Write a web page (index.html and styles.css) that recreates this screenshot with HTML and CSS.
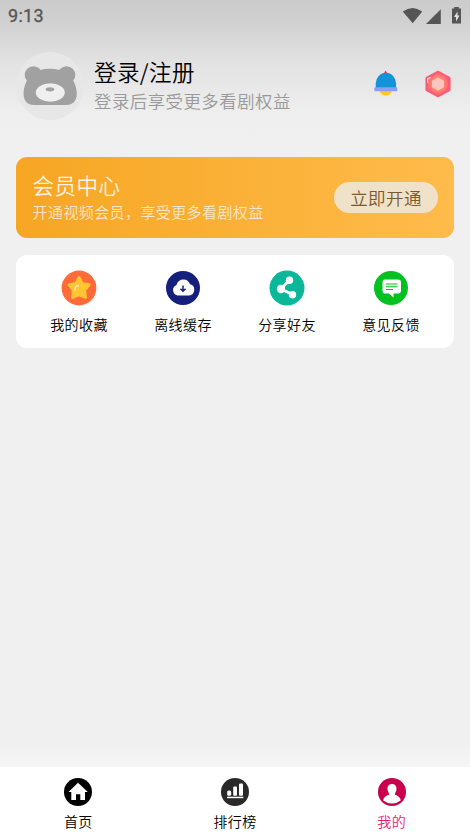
FILE: index.html
```html
<!DOCTYPE html>
<html lang="zh-CN">
<head>
<meta charset="utf-8">
<title>我的</title>
<link rel="stylesheet" href="styles.css">
</head>
<body>
<div class="screen">
  <header class="status">
    <span class="clock">9:13</span>
    <svg class="status-icons" width="62" height="20" viewBox="0 0 62 20" fill="#555">
      <path d="M.8 4.500Q10.500-2.500 20.200 4.500L10.700 16.300Z"/>
      <path d="M38.800 2.200V17H24Z"/>
      <path d="M50 1.500H52.200V0H56.800V1.500H59V16.500H50V1.500Z"/>
      <path d="M55.500 4.500L52 10H54V14.500L57.500 8.500H55.500Z" fill="#e0e0e0"/>
    </svg>
  </header>

  <section class="profile">
    <svg class="avatar" width="68" height="68" viewBox="0 0 68 68">
      <circle cx="34" cy="34" r="34" fill="#e7e7e7"/>
      <g fill="#a1a1a1">
        <circle cx="17.500" cy="23" r="8.800"/>
        <circle cx="50.500" cy="23" r="8.800"/>
        <path d="M34 16.800C48 16.800 58 24 60.500 38C62 47 58 53 50 53H18C10 53 6.500 47 7.800 38C10 24 20 16.800 34 16.800Z"/>
      </g>
      <ellipse cx="34.300" cy="40.500" rx="14.500" ry="9.200" fill="#efefef"/>
      <ellipse cx="34" cy="37.300" rx="4.300" ry="2.100" fill="#a1a1a1"/>
    </svg>
    <div class="account">
      <h1>登录/注册</h1>
      <p>登录后享受更多看剧权益</p>
    </div>
    <div class="shortcuts">
      <svg width="24" height="27" viewBox="0 0 24 27">
        <path d="M9.500 4L11.500 .5L14 4Z" fill="#f03b50"/>
        <path d="M5 19.500H18.500Q17 25.500 11.800 25.500T5 19.500Z" fill="#ffc81e"/>
        <path d="M1.700 18V13.500A10.200 10.700 0 0 1 22.100 13.500V18Z" fill="#1494d8"/>
        <rect x=".3" y="17.300" width="23" height="3.900" rx="1" fill="#8c9df5"/>
      </svg>
      <svg width="26" height="28" viewBox="0 0 26 28">
        <defs><radialGradient id="gem"><stop offset=".4" stop-color="#ff946e"/><stop offset="1" stop-color="#fc5c73"/></radialGradient></defs>
        <path d="M13 1.800L24.500 8V20L13 26.200L1.500 20V8Z" fill="url(#gem)" stroke="#fb5c78" stroke-width="2.200" stroke-linejoin="round"/>
        <path d="M13 7.500L19 10.800V17.200L13 20.500L7 17.200V10.800Z" fill="#ffc4be"/>
        <path d="M2.700 13V9L5.500 7.200" fill="none" stroke="#ffe5e4" stroke-width="1.200"/>
      </svg>
    </div>
  </section>

  <section class="member">
    <div class="member-text">
      <h2>会员中心</h2>
      <p>开通视频会员，享受更多看剧权益</p>
    </div>
    <a class="open-btn">立即开通</a>
  </section>

  <section class="actions">
    <a class="action">
      <svg width="36" height="36" viewBox="0 0 36 36">
        <circle cx="18" cy="18" r="17.400" fill="#ff6b38"/>
        <path d="M18 7.500L21.200 13.700L28 14.800L23.500 20.200L24.500 27.300L18 24.500L11.500 27.300L12.500 20.200L8 14.800L14.800 13.700Z" fill="#ffc632" stroke="#ffc632" stroke-width="3" stroke-linejoin="round"/>
        <path d="M14 20Q13.800 16.300 17.300 15.700" fill="none" stroke="#fff3c9" stroke-width="1.300" stroke-linecap="round"/>
      </svg>
      <span>我的收藏</span>
    </a>
    <a class="action">
      <svg width="36" height="36" viewBox="0 0 36 36">
        <circle cx="18" cy="18" r="17" fill="#14207c"/>
        <path d="M12.500 25.500A5.500 5.500 0 0 1 11.500 15Q13 9.500 18.500 9.500Q23.500 9.500 25 14.300A5.700 5.700 0 0 1 24 25.500Z" fill="#fff"/>
        <path d="M18 15.500V20.500M15.500 18.700L18 21.200L20.500 18.700" fill="none" stroke="#14207c" stroke-width="1.500"/>
      </svg>
      <span>离线缓存</span>
    </a>
    <a class="action">
      <svg width="36" height="36" viewBox="0 0 36 36">
        <circle cx="18" cy="18" r="17.500" fill="#0ab798"/>
        <path d="M20.500 10L12 19L23.500 24.500" fill="none" stroke="#fff" stroke-width="2.800"/>
        <g fill="#fff"><circle cx="20.500" cy="10.300" r="3.700"/><circle cx="12" cy="19" r="4.200"/><circle cx="23.500" cy="24.700" r="3.700"/></g>
      </svg>
      <span>分享好友</span>
    </a>
    <a class="action">
      <svg width="36" height="36" viewBox="0 0 36 36">
        <circle cx="18" cy="18" r="17" fill="#04c122"/>
        <path d="M12 9.500H25Q28 9.500 28 12.500V20.500Q28 23.500 25 23.500H20.500V27.500L16 23.500H12Q9.500 23.500 9.500 20.500V12.500Q9.500 9.500 12 9.500Z" fill="#fff"/>
        <path d="M13 14H24.500M13 16.700H24.500M13 19.500H20" stroke="#04c122" stroke-width="1.100"/>
      </svg>
      <span>意见反馈</span>
    </a>
  </section>

  <nav class="tabs">
    <a class="tab">
      <svg width="28" height="28" viewBox="0 0 28 28">
        <circle cx="14" cy="14" r="14" fill="#000"/>
        <path d="M14 4.800L23.800 14H21V22H16.300V16.200H12V22H7.300V14H4.500Z" fill="#fff"/>
      </svg>
      <span>首页</span>
    </a>
    <a class="tab">
      <svg width="28" height="28" viewBox="0 0 28 28">
        <circle cx="14" cy="14" r="14" fill="#292929"/>
        <g fill="#fff"><rect x="6.200" y="12.500" width="4" height="5.300" rx="1.500"/><rect x="12.200" y="8.500" width="3.800" height="9.300" rx="1"/><rect x="18" y="5.500" width="4" height="12.300" rx="1"/><rect x="6" y="18.700" width="16.300" height="1.500"/></g>
      </svg>
      <span>排行榜</span>
    </a>
    <a class="tab active">
      <svg width="28" height="28" viewBox="0 0 28 28">
        <circle cx="14" cy="14" r="14" fill="#c9004c"/>
        <path d="M14 6C17 6 18.700 8.200 18.500 11.500C18.400 13.500 17 14.700 16.800 16.500C19.500 17.500 22.500 19.200 22.700 22.500Q19 25.500 14 25.500T5.300 22.500C5.500 19.200 8.500 17.500 11.200 16.500C11 14.700 9.600 13.500 9.500 11.500C9.300 8.200 11 6 14 6Z" fill="#fff"/>
      </svg>
      <span>我的</span>
    </a>
  </nav>
</div>
</body>
</html>
```
FILE: styles.css
```css
* { box-sizing: border-box; }
body, h1, h2, p { margin: 0; font-weight: 350; }
body { font-family: "Noto Sans CJK SC", sans-serif; color: #000; }
svg { display: block; flex: none; }
.screen {
  height: 837px;
  display: flex;
  flex-direction: column;
  background: linear-gradient(#cbcbcb 0, #cfcfcf 18px, #e2e2e2 62px, #efefef 115px, #f0f0f0 145px, #f0f0f0 745px, #f6f6f6 767px);
}
.status {
  height: 32px;
  padding: 0 6px 0 8px;
  display: flex;
  justify-content: space-between;
  align-items: center;
}
.clock { font: 400 18px/20px Roboto, sans-serif; color: #555; letter-spacing: .3px; -webkit-text-stroke: .3px #555; }
.status-icons { margin-top: 1px; }
.profile {
  margin: 20px 19px 0 16px;
  height: 68px;
  display: flex;
  align-items: center;
}
.account { flex: 1; margin-left: 10px; white-space: nowrap; }
.account h1 { font-size: 22.500px; line-height: 30px; letter-spacing: .4px; }
.account p { font-size: 17.400px; line-height: 30px; letter-spacing: .5px; color: #999; }
.shortcuts { display: flex; align-items: center; gap: 27px; margin-top: -5px; }
.member {
  margin: 37px 16px 0;
  height: 81px;
  padding: 0 16px;
  border-radius: 11px;
  background: linear-gradient(90deg, #f6a623, #ffbb4b);
  display: flex;
  align-items: center;
  justify-content: space-between;
  white-space: nowrap;
}
.member-text { padding-left: .6px; }
.member h2 { font-size: 21.500px; line-height: 28px; letter-spacing: .5px; color: #faf3e4; margin-top: 1px; }
.member p { font-size: 15px; line-height: 26px; letter-spacing: .4px; color: #f5e6c8; }
.open-btn {
  width: 104px;
  height: 31px;
  border-radius: 16px;
  background: #f0e2c8;
  color: #775a30;
  font-size: 17.500px;
  line-height: 31px;
  letter-spacing: .4px;
  text-align: center;
}
.actions {
  margin: 17px 16px 0;
  height: 93px;
  padding: 15px 11px 0;
  border-radius: 11px;
  background: #fff;
  display: grid;
  grid-template-columns: repeat(4, 1fr);
}
.action, .tab { display: flex; flex-direction: column; align-items: center; }
.action span { margin-top: 8px; font-size: 14px; line-height: 20px; letter-spacing: .4px; }
.tabs {
  margin-top: auto;
  height: 70px;
  padding-top: 11px;
  background: #fff;
  display: grid;
  grid-template-columns: repeat(3, 1fr);
}
.tab span { margin-top: 5px; font-size: 14px; line-height: 20px; letter-spacing: .4px; }
.active { color: #e91e7a; }
```
